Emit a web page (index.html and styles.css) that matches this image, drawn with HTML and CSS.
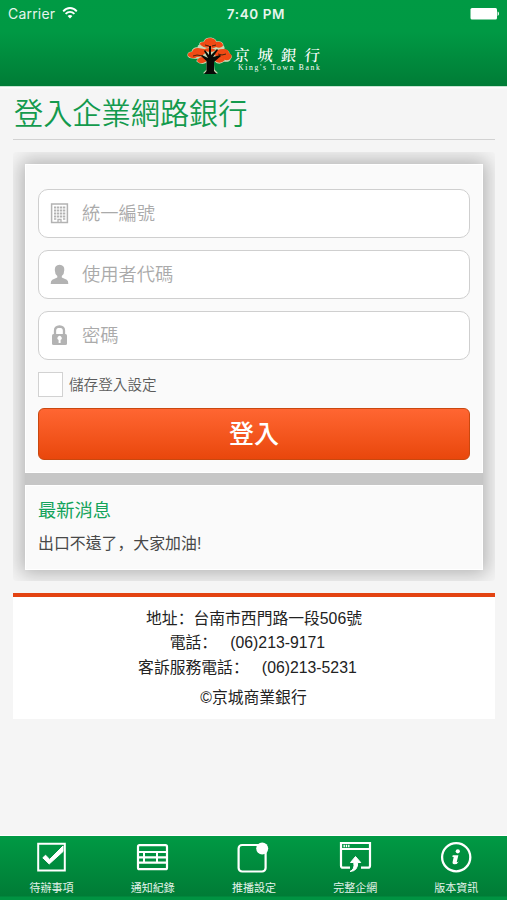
FILE: index.html
```html
<!DOCTYPE html>
<html lang="zh-Hant">
<head>
<meta charset="utf-8">
<title>京城銀行</title>
<link rel="stylesheet" href="styles.css">
</head>
<body>
<header class="header">
  <div class="status">
    <div class="carrier">Carrier
      <svg width="16" height="12" viewBox="0 0 16 12" fill="none" stroke="#fff" stroke-width="1.8"><path d="M1.2 4.3C5-.1 11-.1 14.8 4.3"/><path d="M3.6 6.9c2.6-2.8 6.2-2.8 8.8 0"/><path d="M8 11.6 5.6 9.1c1.4-1.4 3.4-1.4 4.8 0z" fill="#fff" stroke="none"/></svg>
    </div>
    <div class="time">7:40 PM</div>
    <svg class="battery" width="29" height="12" viewBox="0 0 29 12" fill="#fff"><rect x=".5" width="26.5" height="11.5" rx="1.5"/><path d="M27.6 3.6c1.8.6 1.8 3.8 0 4.4z"/></svg>
  </div>
  <div class="brand">
    <svg width="46" height="38" viewBox="0 0 46 38">
      <g stroke="#c9d8b4" stroke-width="1.2" fill="#c9d8b4" stroke-linejoin="round">
        <path d="M13 8Q12 5 17 5Q18 1 24 1Q29 2 29 5Q36 4 36 9Q38 11 36 13Q42 13 42 17Q46 19 43 22Q42 25 37 24Q32 28 28 24L26 24L27 33L30 36H17L20 33V25Q14 28 10 24Q12 22 12 21Q1 22 1 18Q1 15 5 15Q6 10 12 11Q10 9 13 8Z"/>
      </g>
      <g fill="#f04a14">
        <path d="M13.500 8q-2-3 3.500-3 1-4 7-4 5 1 5 4 7-1 7 4-3 3-7 1-3 2-6 0-5 2-9.500-2z"/>
        <path d="M1 19q-1-4 4-4 1-4 6-4l6 1q4 3 0 5-2 3-7 3-4 3-9-1z"/>
        <path d="M28 16q1-4 8-4 6 0 6 4 4 2 2 5-3 4-8 1-4 0-6-2-3-2-2-4z"/>
        <path d="M10 24q1-4 6-4l3 1q2 3-1 4-5 3-8-1z"/>
        <path d="M28 24q0-3 4-3 5 0 6 2-5 5-10 1z"/>
        <path d="M16 13q6-4 13 0-5 4-13 0z"/>
      </g>
      <path d="M19.500 34V24L14 19l1-1 6 3-4-7 1-1 4 5V9h2v9l6-6 1 1-5 7 7-2 1 1-7 6v9l3 3H17z" fill="#080b06"/>
      <path d="M6 19l4-1 6 1M18 8l4 1M25 9l4-1M31 17l4 1 4-1" fill="none" stroke="#30200f" stroke-width=".9"/>
    </svg>
    <div class="wordmark"><div class="cn">京城銀行</div><div class="en">King's Town Bank</div></div>
  </div>
</header>
<main class="main">
  <h1 class="title">登入企業網路銀行</h1>
  <div class="frame">
    <div class="stack">
      <section class="card login">
        <div class="field">
          <svg width="20" height="21" viewBox="0 0 20 21" fill="none" stroke="#b3b3b3"><path d="M1.600 1h15.800v18.500H1.600z" stroke-width="1.500"/><path d="M4 4.500h11.400M4 7.500h11.400M4 10.500h11.400M4 13.500h11.400" stroke-width="2.200" stroke-dasharray="2.300 .7"/><path d="M4 16h2.300M13 16h2.300" stroke-width="1.500"/><path d="M8 19v-2.500h3V19" stroke-width="1.300"/></svg>
          <span>統一編號</span></div>
        <div class="field">
          <svg width="20" height="21" viewBox="0 0 20 21" fill="#b3b3b3"><path d="M4.800 6Q4.600 1 9.500.8 14.600 1 14.300 6q0 4-2.500 6v1.600l5 2.200q1.600.9 1.500 4.200H.7q0-3.300 1.600-4.200l5-2.200V12Q4.800 10 4.800 6z"/></svg>
          <span>使用者代碼</span></div>
        <div class="field">
          <svg width="20" height="21" viewBox="0 0 20 21"><path d="M5 10V5.700Q5 1.600 9.500 1.500 14 1.600 14 5.700V10" fill="none" stroke="#b3b3b3" stroke-width="2.300"/><rect x="2" y="9" width="15" height="11" rx="1.500" fill="#b3b3b3"/><path d="M8.600 18v-3a2.100 2.100 0 1 1 2 0v3z" fill="#fff"/></svg>
          <span>密碼</span></div>
        <div class="remember"><i class="box"></i><span>儲存登入設定</span></div>
        <div class="submit">登入</div>
      </section>
      <section class="card news">
        <h2>最新消息</h2>
        <p>出口不遠了<span class="punct" lang="zh-Hans">，</span>大家加油!</p>
      </section>
    </div>
  </div>
  <footer class="contact">
    <p>地址<span class="punct" lang="zh-Hans">：</span>台南市西門路一段506號</p>
    <p>電話<span class="punct" lang="zh-Hans">：</span>&nbsp;&nbsp; (06)213-9171&nbsp;&nbsp;&nbsp;</p>
    <p>客訴服務電話<span class="punct" lang="zh-Hans">：</span>&nbsp;&nbsp; (06)213-5231&nbsp;&nbsp;&nbsp;</p>
    <p class="copy">©京城商業銀行</p>
  </footer>
</main>
<nav class="tabs">
  <div class="tab"><svg width="34" height="34" viewBox="0 0 34 34" fill="none" stroke="#fff"><path d="M4.200 3.800h26.600v26.600H4.200z" stroke-width="2"/><path d="M8.800 17.800l2.800-2.600 4 4.200L29 6v5.500L15.200 24z" fill="#fff" stroke-width="1"/></svg><span>待辦事項</span></div>
  <div class="tab"><svg width="34" height="34" viewBox="0 0 34 34" fill="none" stroke="#fff" stroke-width="2.200"><rect x="3" y="5.200" width="29" height="24" rx="1.500"/><path d="M3 12h29M3 17.300h29M3 22.600h29" stroke-width="2.200"/><path d="M9 12v10.600M22 12v10.600" stroke-width="2"/></svg><span>通知紀錄</span></div>
  <div class="tab"><svg width="34" height="34" viewBox="0 0 34 34" fill="none" stroke="#fff" stroke-width="2.200"><rect x="2.600" y="5" width="27" height="26.500" rx="3.500"/><circle cx="26.200" cy="8.600" r="6" fill="#fff" stroke="none"/></svg><span>推播設定</span></div>
  <div class="tab"><svg width="34" height="34" viewBox="0 0 34 34" fill="none" stroke="#fff" stroke-width="2.200"><path d="M12 27.700H5Q3 27.700 3 25.700V3h29v22.700q0 2-2 2h-7M3 9h29"/><path d="M5.500 6h6" stroke-width="2.500" stroke-dasharray="1.400 .9"/><path d="M12 31.500q5-2 3.800-9h-3.300l5-6 5.200 6h-3Q20 31 12 31.500z" fill="#fff" stroke-width="1"/></svg><span>完整企網</span></div>
  <div class="tab"><svg width="34" height="34" viewBox="0 0 34 34"><circle cx="17.200" cy="17.200" r="14.100" fill="none" stroke="#fff" stroke-width="2.300"/><circle cx="18.800" cy="11.300" r="2.100" fill="#fff"/><path d="M13.800 15.200h5.600l-1.600 6.600q0 1.300 2.200-.5-1.600 3.200-4.800 3-2.200-.4-1.500-2.900l1-4.400-1.500-.3z" fill="#fff"/></svg><span>版本資訊</span></div>
</nav>
</body>
</html>
```
FILE: styles.css
```css
* { box-sizing: border-box; margin: 0; padding: 0; }
body {
  width: 507px; height: 900px; overflow: hidden;
  display: flex; flex-direction: column;
  background: #f5f5f5;
  font-family: "Liberation Sans", "Noto Sans CJK TC", sans-serif;
}
svg { display: block; flex: none; }
.header {
  height: 87px; flex: none;
  background: linear-gradient(#009a44 0, #009944 32px, #007c36 86px);
  border-bottom: 1px solid #c5e5d2;
  box-shadow: 0 1px 2px #fff;
  color: #fff;
}
.status {
  height: 28px; padding: 0 8px;
  display: grid; grid-template-columns: 1fr auto 1fr; align-items: center;
  font: 500 13.5px/28px Inter, sans-serif; letter-spacing: .3px;
}
.carrier { display: flex; align-items: center; gap: 7px; font-weight: 400; font-size: 14px; letter-spacing: .2px; color: #e6f5ec; }
.carrier svg { margin-top: -2px; }
.time { font-weight: 600; letter-spacing: .6px; padding-left: 5px; color: #e6f5ec; }
.battery { justify-self: end; }
.brand { display: flex; width: 136px; margin: 9px 0 0 187px; }
.wordmark { padding: 7px 0 0 1px; white-space: nowrap; }
.cn { font: 500 15.5px/20px "Noto Serif CJK TC", "Noto Sans CJK TC", serif; letter-spacing: 8px; transform: skewX(-4deg); }
.en { font: 7.6px/9px "Liberation Serif", serif; letter-spacing: 1.7px; margin: -1px 0 0 4px; }
.main { flex: 1; padding: 0 12px 0 13px; }
.title {
  height: 53px; border-bottom: 1px solid #d2d2d2; padding-left: 1px;
  color: #139a4d; font-size: 29.2px; line-height: 54px; font-weight: 350;
}
.frame {
  margin-top: 12px; padding: 12px; height: 429px;
  overflow: hidden; border-radius: 3px;
}
.stack {
  display: flex; flex-direction: column; gap: 12px;
  background: #c6c6c6; box-shadow: 0 0 18px 4px rgba(0,0,0,.27);
}
.card { background: #fafafa; border: 1px solid #fff; }
.login { height: 309px; padding: 24px 12px 0; }
.field {
  height: 49px; margin-bottom: 12px; padding-left: 11px;
  border: 1.5px solid #cfcfcf; border-radius: 10px; background: #fff;
  display: flex; align-items: center; gap: 12px;
  font-size: 18.3px; font-weight: 350; color: #aaa;
}
.field span { margin-top: -3px; }
.remember { display: flex; align-items: center; gap: 6px; height: 25px; font-size: 14.6px; font-weight: 350; color: #5c5c5c; }
.remember span { margin-top: -2px; }
.box { width: 25px; height: 25px; background: #fff; border: 1.5px solid #d2d2d2; }
.submit {
  height: 52px; margin-top: 11px;
  border: 1px solid #c9480f; border-radius: 6px;
  background: linear-gradient(#ff6632, #e9470c);
  color: #fff; text-align: center; font-size: 25px; line-height: 51px; font-weight: 500;
}
.news { height: 85px; padding: 11px 12px; }
.news h2 { color: #13a35b; font-size: 18.3px; line-height: 28px; font-weight: 400; }
.news p { color: #484848; font-size: 15.9px; line-height: 24px; margin-top: 6px; }
.punct { font-family: "Noto Sans CJK SC", sans-serif; }
.contact {
  margin-top: 12px; height: 126px; padding-top: 9px;
  border-top: 4px solid #e34312; background: #fff;
  text-align: center; font-size: 15.8px; line-height: 24.4px; color: #222;
}
.contact p { height: 24.4px; }
.contact .copy { margin: 7px 1px 0 0; }
.tabs {
  height: 64px; flex: none; padding: 4px 0 0 1px;
  display: grid; grid-template-columns: repeat(5, 101.2px);
  background: linear-gradient(#009a44, #007c36 60px, #009342 61px);
  box-shadow: 0 -1px 1px #fff;
  color: #e4f3ea; font-size: 11px; line-height: 16px;
}
.tab { display: flex; flex-direction: column; align-items: center; gap: 5px; }
.tab svg { margin: 0 1px 1px 0; }
```
